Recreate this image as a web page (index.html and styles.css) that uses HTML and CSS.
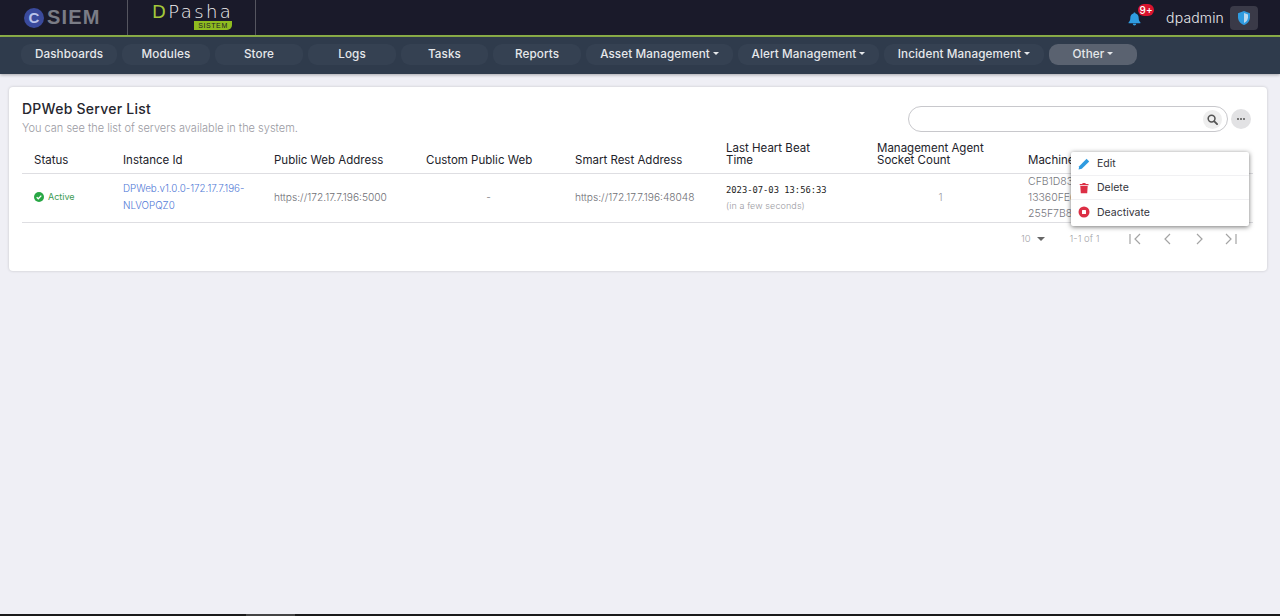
FILE: index.html
```html
<!DOCTYPE html>
<html lang="en">
<head>
<meta charset="utf-8">
<title>DPWeb Server List</title>
<link rel="stylesheet" href="styles.css">
</head>
<body>
<header class="topbar">
  <div class="brand brand-csiem">
    <span class="c-mark">C</span><span class="siem">SIEM</span>
  </div>
  <div class="brand brand-dpasha">
    <div class="dp-name"><span class="dp-d">D</span>Pasha</div>
    <div class="dp-sub">SISTEM</div>
  </div>
  <div class="top-right">
    <span class="bell">
      <svg width="13" height="14" viewBox="0 0 14 15"><path fill="#2f9be0" d="M7 0.5c.7 0 1.1.5 1.1 1.1 2.2.5 3.4 2.3 3.400 4.500 0 2.600.6 3.700 1.900 5.100.2.300 0 .8-.4.8H1c-.4 0-.6-.5-.4-.8C1.900 9.800 2.500 8.700 2.500 6.100c0-2.200 1.200-4 3.400-4.500C5.900 1 6.300.5 7 .5zM5.200 12.700h3.600C8.800 13.800 8 14.500 7 14.500s-1.800-.7-1.800-1.800z"/></svg>
      <span class="badge">9+</span>
    </span>
    <span class="user">dpadmin</span>
    <span class="shield-box">
      <svg width="12" height="14" viewBox="0 0 12 14"><path fill="#2f9be0" d="M6 0l6 2.300v3.900c0 3.600-2.500 6.500-6 7.800-3.500-1.300-6-4.200-6-7.800V2.300z"/><path fill="#bcd9ee" d="M6 2v10c2.400-1.100 4-3.200 4-5.800V3.600z"/></svg>
    </span>
  </div>
</header>
<nav class="navbar">
  <a class="nav-btn w96">Dashboards</a>
  <a class="nav-btn w88">Modules</a>
  <a class="nav-btn w88">Store</a>
  <a class="nav-btn w88">Logs</a>
  <a class="nav-btn w87">Tasks</a>
  <a class="nav-btn w88">Reports</a>
  <a class="nav-btn caret w147">Asset Management</a>
  <a class="nav-btn caret w141">Alert Management</a>
  <a class="nav-btn caret w160">Incident Management</a>
  <a class="nav-btn caret active w88">Other</a>
</nav>
<main class="content">
  <section class="card">
    <div class="card-head">
      <div>
        <h1 class="title">DPWeb Server List</h1>
        <p class="subtitle">You can see the list of servers available in the system.</p>
      </div>
      <div class="tools">
        <div class="search">
          <span class="search-btn">
            <svg width="11" height="11" viewBox="0 0 12 12"><circle cx="5" cy="5" r="3.700" fill="none" stroke="#555" stroke-width="1.700"/><path d="M8 8l3 3" stroke="#555" stroke-width="2" stroke-linecap="round"/></svg>
          </span>
        </div>
        <span class="more"><i></i><i></i><i></i></span>
      </div>
    </div>
    <div class="table-wrap">
      <table class="grid">
        <colgroup>
          <col class="c1"><col class="c2"><col class="c3"><col class="c4"><col class="c5"><col class="c6"><col class="c7"><col class="c8">
        </colgroup>
        <thead>
          <tr>
            <th>Status</th>
            <th>Instance Id</th>
            <th>Public Web Address</th>
            <th>Custom Public Web</th>
            <th>Smart Rest Address</th>
            <th>Last Heart Beat<br>Time</th>
            <th>Management Agent<br>Socket Count</th>
            <th>Machine Id</th>
          </tr>
        </thead>
        <tbody>
          <tr>
            <td><span class="status">
              <svg width="10" height="10" viewBox="0 0 10 10"><circle cx="5" cy="5" r="5" fill="#28a745"/><path d="M2.700 5.200l1.600 1.600 3-3.200" fill="none" stroke="#fff" stroke-width="1.300"/></svg>
              Active</span></td>
            <td class="nowrap"><a class="link">DPWeb.v1.0.0-172.17.7.196-<br>NLVOPQZ0</a></td>
            <td>https://172.17.7.196:5000</td>
            <td class="center">-</td>
            <td>https://172.17.7.196:48048</td>
            <td class="beat"><div class="mono">2023-07-03 13:56:33</div><div class="ago">(in a few seconds)</div></td>
            <td class="center faint">1</td>
            <td class="machine">CFB1D83A7E41<br>13360FE6A2C9<br>255F7B8F04D1</td>
          </tr>
        </tbody>
      </table>
    </div>
    <div class="pager">
      <span class="size">10</span>
      <span class="tri"></span>
      <span class="range">1-1 of 1</span>
      <svg class="pg" width="14" height="12" viewBox="0 0 14 12"><path d="M2 1v10M12 1L7 6l5 5" fill="none" stroke="#a4a4a4" stroke-width="1.200"/></svg>
      <svg class="pg" width="14" height="12" viewBox="0 0 14 12"><path d="M10 1L5 6l5 5" fill="none" stroke="#a4a4a4" stroke-width="1.200"/></svg>
      <svg class="pg" width="14" height="12" viewBox="0 0 14 12"><path d="M5 1l5 5-5 5" fill="none" stroke="#a4a4a4" stroke-width="1.200"/></svg>
      <svg class="pg" width="14" height="12" viewBox="0 0 14 12"><path d="M2 1l5 5-5 5M12 1v10" fill="none" stroke="#a4a4a4" stroke-width="1.200"/></svg>
    </div>
    <ul class="menu">
      <li>
        <svg width="12" height="12" viewBox="0 0 12 12"><path fill="#2f9be0" d="M8.600.8l2.600 2.600-7.400 7.400L.6 11.400l.6-3.200z"/></svg>
        Edit
      </li>
      <li>
        <svg width="12" height="12" viewBox="0 0 12 12"><path fill="#dc2f45" d="M1.500 2h2.700l.5-1h2.600l.5 1h2.700v1.300h-8.500zM2.300 4h7.400l-.5 7.200H2.800z"/></svg>
        Delete
      </li>
      <li>
        <svg width="12" height="12" viewBox="0 0 12 12"><circle cx="6" cy="6" r="5.500" fill="#dc2f45"/><rect x="4" y="4" width="4" height="4" rx=".5" fill="#fff"/></svg>
        Deactivate
      </li>
    </ul>
  </section>
</main>
<div class="bottom-strip"><span class="thumb"></span></div>
</body>
</html>
```
FILE: styles.css
```css
* { box-sizing: border-box; }
html, body { height: 100%; }
body {
  margin: 0;
  height: 616px;
  overflow: hidden;
  display: flex;
  flex-direction: column;
  background: #efeff5;
  font-family: "Inter", "Liberation Sans", sans-serif;
  color: #212529;
}
.topbar {
  height: 37px;
  flex: none;
  display: flex;
  align-items: stretch;
  background: #1a1a2a;
  border-bottom: 2px solid #8db049;
}
.brand { display: flex; align-items: center; }
.brand-csiem { width: 128px; padding-left: 24px; border-right: 1px solid #55555f; }
.c-mark {
  width: 20px; height: 20px; border-radius: 50%;
  background: #3a4a9c; color: #b9c3ea;
  display: flex; align-items: center; justify-content: center;
  font: 700 15px "Liberation Sans", sans-serif;
  margin-right: 3px;
}
.siem { font: 700 20px "Liberation Sans", sans-serif; color: #7a7c86; letter-spacing: 1.2px; }
.brand-dpasha {
  width: 128px;
  flex-direction: column;
  align-items: flex-start;
  justify-content: flex-start;
  padding: 4px 0 0 24px;
  border-right: 1px solid #55555f;
}
.dp-name { font: 300 18px/16px "DejaVu Sans", sans-serif; color: #f3f3f3; letter-spacing: 2.400px; white-space: nowrap; }
.dp-d { color: #a4c83a; font-weight: 400; }
.dp-sub {
  margin: 1px 0 0 42px; width: 38px; height: 9px;
  background: #8fbc1f; color: #1a1a2a;
  font: 400 7px/9px "Liberation Sans", sans-serif;
  text-align: center; letter-spacing: .6px;
  border-radius: 0 0 5px 0;
}
.top-right { margin-left: auto; display: flex; align-items: center; padding-right: 22px; }
.bell { position: relative; display: flex; margin-right: 25px; margin-top: 3px; }
.badge {
  position: absolute; left: 10px; top: -8px;
  width: 16px; height: 12px; border-radius: 6px;
  background: #d9132e; color: #fff;
  font-size: 10px; line-height: 12px; text-align: center; font-weight: 500;
}
.user { color: #e9e9ec; font-size: 14px; margin-right: 6px; letter-spacing: .15px; font-weight: 300; }
.shield-box {
  width: 28px; height: 24px; border-radius: 4px; background: #3a3a48;
  display: flex; align-items: center; justify-content: center;
}
.navbar {
  height: 37px;
  flex: none;
  display: flex;
  align-items: center;
  gap: 5px;
  padding: 0 0 3px 21px;
  background: #2f3b4c;
  box-shadow: 0 1px 3px rgba(0,0,0,.3);
}
.nav-btn {
  height: 21px;
  display: flex; align-items: center; justify-content: center;
  border-radius: 9px;
  background: #354152;
  color: #e6e8eb;
  font-size: 11.700px;
  font-weight: 500;
  letter-spacing: .1px;
}
.w87 { width: 87px; }
.w88 { width: 88px; }
.w96 { width: 96px; }
.w147 { width: 147px; }
.w141 { width: 141px; }
.w160 { width: 160px; }
.caret::after {
  content: "";
  margin-left: 3px; margin-top: -2px;
  border-left: 3px solid transparent;
  border-right: 3px solid transparent;
  border-top: 3px solid #e6e8eb;
}
.active { background: #5a6270; }
.content { flex: 1; padding: 13px 13px 0 9px; }
.card {
  position: relative;
  height: 184px;
  background: #fff;
  border-radius: 4px;
  box-shadow: 0 0 3px rgba(0,0,0,.18);
  padding: 0 13px;
}
.card-head { display: flex; justify-content: space-between; height: 53px; padding-top: 13px; }
.title { margin: 0; font-size: 14px; line-height: 18px; font-weight: 500; letter-spacing: .25px; color: #26262e; }
.subtitle { margin: 3px 0 0; font-size: 11px; line-height: 14px; color: #9a9aa2; font-weight: 300; }
.tools { display: flex; align-items: flex-start; gap: 3px; margin-top: 6px; margin-right: 3px; }
.search {
  width: 320px; height: 26px; border: 1px solid #c8c8cc; border-radius: 13px;
  display: flex; align-items: center; justify-content: flex-end; padding-right: 5px;
}
.search-btn {
  width: 19px; height: 19px; border-radius: 50%; background: #eeeeee;
  display: flex; align-items: center; justify-content: center;
}
.more {
  width: 20px; height: 20px; border-radius: 50%; background: #e2e2e4;
  display: flex; align-items: center; justify-content: center; gap: 1px; margin-top: 3px;
}
.more i { width: 2px; height: 2px; border-radius: 50%; background: #555; }
.table-wrap { overflow: hidden; width: 1231px; }
.grid { border-collapse: collapse; table-layout: fixed; width: 1320px; font-size: 10.200px; }
.c1 { width: 89px; } .c2 { width: 151px; } .c3 { width: 152px; } .c4 { width: 149px; }
.c5 { width: 151px; } .c6 { width: 151px; } .c7 { width: 151px; } .c8 { width: 326px; }
th {
  height: 33px;
  padding: 0 12px 7px;
  text-align: left;
  vertical-align: bottom;
  font-weight: 400;
  font-size: 11.500px;
  line-height: 12px;
  color: #22222a;
  border-bottom: 1px solid #dedee2;
}
td {
  height: 49px;
  padding: 0 12px 1px;
  color: #6f6f76;
  font-weight: 300;
  line-height: 16px;
  border-bottom: 1px solid #dedee2;
}
.center { text-align: center; }
.faint { color: #9a9aa2; }
.nowrap { white-space: nowrap; }
.status { display: flex; align-items: center; gap: 4px; color: #3d9a52; font-size: 9px; font-weight: 400; }
.link { color: #4f78d6; font-size: 9.800px; }
.beat { padding-top: 3px; }
.mono { font: 400 8.800px/14px "DejaVu Sans Mono", monospace; color: #222; }
.ago { font-size: 9px; line-height: 18px; color: #9a9aa2; letter-spacing: .1px; }
.machine { font-size: 10.500px; line-height: 16px; color: #77777e; white-space: nowrap; padding-bottom: 0; }
.pager { display: flex; align-items: center; height: 32px; padding-left: 999px; color: #a4a4a8; font-size: 9.500px; font-weight: 300; }
.tri {
  margin: 1px 0 0 6px;
  border-left: 4px solid transparent; border-right: 4px solid transparent;
  border-top: 4px solid #666;
}
.range { margin-left: 25px; margin-right: 29px; white-space: nowrap; flex: none; }
.pg { margin-right: 18px; flex: none; }
.menu {
  position: absolute;
  left: 1062px; top: 65px;
  width: 178px; height: 74px;
  margin: 0; padding: 0;
  list-style: none;
  background: #fff;
  border-radius: 2px;
  box-shadow: 0 1px 5px rgba(0,0,0,.55);
}
.menu li {
  height: 24.200px;
  display: flex; align-items: center; gap: 7px;
  padding-left: 7px;
  font-size: 10.500px;
  color: #33333b;
  border-bottom: 1px solid #f1f1f3;
}
.menu li:last-child { border-bottom: 0; }
.bottom-strip { height: 2px; flex: none; background: #1a1a1a; padding-left: 246px; display: flex; }
.thumb { width: 49px; background: #444; }
```
